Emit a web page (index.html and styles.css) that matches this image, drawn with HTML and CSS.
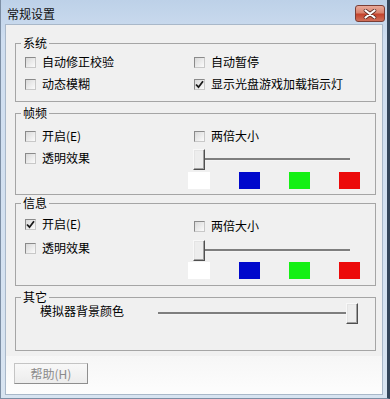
FILE: index.html
```html
<!DOCTYPE html>
<html lang="zh-CN">
<head>
<meta charset="utf-8">
<title>常规设置</title>
<link rel="stylesheet" href="styles.css">
</head>
<body>
<div class="window">
  <div class="titlebar">
    <span class="title">常规设置</span>
    <button class="close" aria-label="关闭">
      <svg width="14" height="10" viewBox="0 0 14 10">
        <path d="M2.5 1.5 L11.5 8.5 M11.5 1.5 L2.5 8.5" stroke="#5a2a22" stroke-width="3.6" stroke-linecap="round"/>
        <path d="M2.5 1.5 L11.5 8.5 M11.5 1.5 L2.5 8.5" stroke="#ffffff" stroke-width="2.2" stroke-linecap="round"/>
      </svg>
    </button>
  </div>
  <div class="client">
    <fieldset class="group g-sys">
      <legend>系统</legend>
      <div class="cols">
        <div class="col left">
          <label class="chk"><span class="box"></span>自动修正校验</label>
          <label class="chk"><span class="box"></span>动态模糊</label>
        </div>
        <div class="col right">
          <label class="chk"><span class="box"></span>自动暂停</label>
          <label class="chk"><span class="box"><svg class="tick" width="9" height="9" viewBox="0 0 9 9"><path d="M1 4.5 L3.5 7.2 L8 1.2" fill="none" stroke="#1a1a1a" stroke-width="1.8"/></svg></span>显示光盘游戏加载指示灯</label>
        </div>
      </div>
    </fieldset>

    <fieldset class="group g-frame">
      <legend>帧频</legend>
      <div class="cols">
        <div class="col left">
          <label class="chk"><span class="box"></span>开启(E)</label>
          <label class="chk"><span class="box"></span>透明效果</label>
        </div>
        <div class="col right">
          <label class="chk"><span class="box"></span>两倍大小</label>
          <div class="slider"><span class="thumb"></span><span class="track"></span></div>
          <div class="swatches">
            <span class="sw white"></span><span class="sw blue"></span><span class="sw green"></span><span class="sw red"></span>
          </div>
        </div>
      </div>
    </fieldset>

    <fieldset class="group g-info">
      <legend>信息</legend>
      <div class="cols">
        <div class="col left">
          <label class="chk"><span class="box"><svg class="tick" width="9" height="9" viewBox="0 0 9 9"><path d="M1 4.5 L3.5 7.2 L8 1.2" fill="none" stroke="#1a1a1a" stroke-width="1.8"/></svg></span>开启(E)</label>
          <label class="chk"><span class="box"></span>透明效果</label>
        </div>
        <div class="col right">
          <label class="chk"><span class="box"></span>两倍大小</label>
          <div class="slider"><span class="thumb"></span><span class="track"></span></div>
          <div class="swatches">
            <span class="sw white"></span><span class="sw blue"></span><span class="sw green"></span><span class="sw red"></span>
          </div>
        </div>
      </div>
    </fieldset>

    <fieldset class="group g-other">
      <legend>其它</legend>
      <div class="other-row">
        <span class="other-label">模拟器背景颜色</span>
        <div class="slider wide"><span class="track"></span><span class="thumb"></span></div>
      </div>
    </fieldset>

    <div class="footer">
      <button class="help" disabled>帮助(H)</button>
    </div>
  </div>
</div>
</body>
</html>
```

FILE: styles.css
```css
* { box-sizing: border-box; }
html, body { margin: 0; padding: 0; background: #ffffff; }
body {
  font-family: "Noto Sans CJK SC", "Noto Sans", sans-serif;
  font-size: 12px;
  color: #000;
}

.window {
  width: 390px;
  height: 399px;
  display: flex;
  flex-direction: column;
  background: linear-gradient(#bdd1e8, #cfdef0 40px, #d8e4f1);
  border-left: 1px solid #7d8fa5;
  border-right: 3px solid #33455a;
  border-bottom: 1px solid #7d8fa5;
  padding: 0 4px 3px 4px;
}

.titlebar {
  height: 24px;
  margin: 0 -4px;
  padding: 0 2px 0 6px;
  display: flex;
  align-items: flex-start;
  justify-content: space-between;
}
.title {
  font-size: 12px;
  line-height: 14px;
  padding-top: 7px;
  color: #111;
}
.close {
  width: 30px;
  height: 17px;
  margin-top: 5px;
  padding: 0;
  border: 1px solid #7a3e36;
  border-radius: 3px;
  background: linear-gradient(#e9a99a, #d9846f 45%, #c4432c 55%, #d0705a);
  display: flex;
  align-items: center;
  justify-content: center;
}

.client {
  flex: 1;
  background: #f0f0f0;
  border: 1px solid #a9b8c9;
  padding: 11px 9px 0 9px;
  display: flex;
  flex-direction: column;
}

.group {
  margin: 0;
  padding: 0;
  border: 1px solid #a5a5a5;
  min-width: 0;
  width: 361px;
}
.group legend {
  margin-left: 5px;
  padding: 0 2px;
  font-size: 12px;
  line-height: 14px;
}

.cols {
  display: grid;
  grid-template-columns: 178px 1fr;
}
.col {
  display: flex;
  flex-direction: column;
  align-items: flex-start;
}
.col.left { padding-left: 9px; }

.chk {
  display: flex;
  align-items: center;
  gap: 6px;
  height: 16px;
  line-height: 16px;
  white-space: nowrap;
}
.box {
  width: 11px;
  height: 11px;
  flex: none;
  border: 1px solid;
  border-color: #8a8a8a #c8c8c8 #c8c8c8 #8a8a8a;
  background: linear-gradient(135deg, #d9d9d9, #fbfbfb);
  display: flex;
  align-items: center;
  justify-content: center;
}

/* 系统 */
.g-sys { margin-bottom: 4px; }
.g-sys .cols { padding: 4px 0 9px; }
.g-sys .col { gap: 6px; }

/* 帧频 */
.g-frame .cols { padding-bottom: 5px; }
.g-frame .col { padding-top: 8px; }
.g-frame .col.left { gap: 6px; }
.g-frame .slider { margin-top: 5px; }
.g-frame .swatches { margin-top: 2px; }

/* 信息 */
.g-info { margin-top: 1px; margin-bottom: 4px; }
.g-info .cols { padding-bottom: 6px; }
.g-info .col.left { padding-top: 6px; gap: 8px; }
.g-info .col.right { padding-top: 8px; }
.g-info .slider { margin-top: 6px; }
.g-info .swatches { margin-top: 1px; }

.slider {
  display: flex;
  align-items: center;
  width: 157px;
  height: 21px;
  margin-left: -1px;
}
.thumb {
  width: 12px;
  height: 21px;
  flex: none;
  border: 1px solid;
  border-color: #f8f8f8 #4f4f4f #4f4f4f #f8f8f8;
  box-shadow: inset -1px -1px 0 #a0a0a0, inset 1px 1px 0 #e4e4e4;
  background: #ededed;
}
.track {
  flex: 1;
  height: 3px;
  background: #7e7e7e;
  border-bottom: 1px solid #f4f4f4;
}

.swatches {
  display: flex;
  gap: 29px;
  margin-left: -6px;
}
.sw { width: 21px; height: 17px; }
.sw.white { width: 22px; background: #ffffff; }
.sw.blue { background: #0008cc; }
.sw.green { background: #14f014; }
.sw.red { background: #ec0a0a; }

/* 其它 */
.other-row {
  display: flex;
  justify-content: space-between;
  padding: 0 17px 26px 24px;
  margin-top: -1px;
}
.other-label {
  line-height: 14px;
  margin-top: 1px;
}
.slider.wide {
  width: 200px;
  margin-left: 0;
}

.footer {
  flex: 1;
  margin: 5px -9px 0;
  padding: 7px 8px 0;
  background: linear-gradient(#f6f6f6, #fdfdfd);
}
.help {
  width: 74px;
  height: 21px;
  padding: 0;
  border: 1px solid;
  border-color: #c4c4c4 #8e8e8e #8e8e8e #c4c4c4;
  background: linear-gradient(#f8f8f8, #ececec);
  font-family: "Noto Sans CJK SC", "Noto Sans", sans-serif;
  font-size: 12px;
  color: #8a8a8a;
}
```
